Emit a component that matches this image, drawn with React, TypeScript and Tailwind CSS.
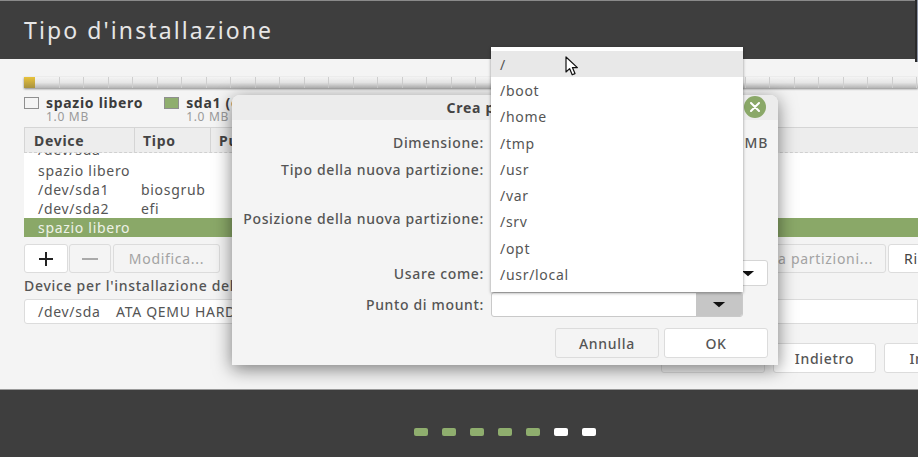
import React from 'react';

const MOUNT_POINTS = ['/', '/boot', '/home', '/tmp', '/usr', '/var', '/srv', '/opt', '/usr/local'];
const SEGMENTS = Array.from({ length: 37 }, (_, i) => i);
const STEPS = [true, true, true, true, true, false, false];

function Caret({ className = '' }: { className?: string }) {
  return (
    <svg viewBox="0 0 16 8" className={`w-[14px] h-[7px] ${className}`}>
      <path d="M1 1h14L8 7z" fill="#111" />
    </svg>
  );
}

function PartitionBar() {
  return (
    <div className="flex h-[11px] shadow-[0_1px_2px_rgba(0,0,0,0.45)] bg-gradient-to-b from-[#f4f4f4] via-[#e6e6e6] to-[#b5b5b5]">
      <div className="w-[11px] shrink-0 bg-gradient-to-b from-[#e8c23a] to-[#a8923f]" />
      {SEGMENTS.map(i => (
        <div key={i} className="w-[24.5px] shrink-0 border-r border-[#cfcfcf]" />
      ))}
    </div>
  );
}

function LegendItem({ name, swatch }: { name: string; swatch: string }) {
  return (
    <div className="flex gap-[7px]">
      <div className={`w-[15px] h-[12px] mt-[2px] border border-[#8f8f8f] ${swatch}`} />
      <div className="flex flex-col">
        <span className="text-[14px] leading-[16px] font-bold text-[#3c3c3c]">{name}</span>
        <span className="text-[12px] leading-[11px] text-[#9a9a9a]">1.0 MB</span>
      </div>
    </div>
  );
}

function ToolButton({ children, className = '' }: { children: React.ReactNode; className?: string }) {
  return (
    <div className={`h-[29px] flex items-center justify-center rounded-[3px] border border-[#dcdcdc] text-[14px] whitespace-nowrap ${className}`}>
      {children}
    </div>
  );
}

function InstallPage() {
  return (
    <main className="flex-1 bg-[#f4f4f4] pl-6 pt-[18px] overflow-hidden">
      <PartitionBar />
      <div className="flex gap-[21px] mt-[7px] h-[32px]">
        <LegendItem name="spazio libero" swatch="bg-[#f4f4f4]" />
        <LegendItem name="sda1 (efi)" swatch="bg-[#8fae6e]" />
      </div>

      <div className="border-t border-[#d5d5d5]">
        <div className="flex h-[25px] bg-[#ededed] border-b border-dashed border-[#d0d0d0] text-[14px] font-bold text-[#444]">
          <div className="w-[111px] pl-[9px] flex items-center border-l border-r border-[#d5d5d5]">Device</div>
          <div className="w-[76px] pl-[8px] flex items-center border-r border-[#d5d5d5]">Tipo</div>
          <div className="pl-[8px] flex items-center">Punto di mount</div>
        </div>
        <div className="h-[65px] bg-white flex flex-col justify-end overflow-hidden text-[14px] text-[#555]">
          {[
            ['/dev/sda', ''],
            ['spazio libero', ''],
            ['/dev/sda1', 'biosgrub'],
            ['/dev/sda2', 'efi'],
          ].map(([device, kind], i) => (
            <div key={device + kind} className={`flex h-[19px] shrink-0 items-center ${i === 0 ? 'mb-[2px]' : ''}`}>
              <span className="w-[103px] pl-[14px] box-content">{device}</span>
              <span>{kind}</span>
            </div>
          ))}
        </div>
        <div className="h-[19px] bg-[#8aa868] flex items-center pl-[14px] text-[14px] text-[#eef2e8]">spazio libero</div>
      </div>

      <div className="flex justify-between mt-[7px] mr-[-70px]">
        <div className="flex gap-[1px]">
          <ToolButton className="w-[44px] bg-white">
            <span className="relative block w-[14px] h-[14px]">
              <span className="absolute left-0 top-[6px] w-[14px] h-[2px] bg-[#222]" />
              <span className="absolute left-[6px] top-0 w-[2px] h-[14px] bg-[#222]" />
            </span>
          </ToolButton>
          <ToolButton className="w-[42px]">
            <span className="block w-[16px] h-[2px] bg-[#aaa]" />
          </ToolButton>
          <ToolButton className="w-[107px] ml-[1px] text-[#a3a3a3]">Modifica...</ToolButton>
        </div>
        <div className="flex gap-[2px]">
          <ToolButton className="w-[200px] pr-[12px] text-[#a3a3a3]">Nuova tabella partizioni...</ToolButton>
          <ToolButton className="w-[100px] justify-start pl-[15px] bg-white text-[#444]">Ripristina</ToolButton>
        </div>
      </div>

      <p className="mt-[3px] h-[20px] leading-[20px] text-[14px] font-medium text-[#555] whitespace-nowrap">
        Device per l'installazione del boot loader:
      </p>
      <div className="mt-[3px] h-[25px] bg-white border border-[#dcdcdc] rounded-l-[3px] flex items-center pl-[13px] text-[14px] text-[#555] whitespace-nowrap">
        <span className="w-[78px]">/dev/sda</span>
        <span>ATA QEMU HARDDISK (21.5 GB)</span>
      </div>

      <div className="flex justify-end gap-[8px] mt-[19px] mr-[-72px]">
        <ToolButton className="w-[104px] h-[30px]">Esci</ToolButton>
        <ToolButton className="w-[103px] h-[30px] bg-white text-[#555] font-medium">Indietro</ToolButton>
        <ToolButton className="w-[106px] h-[30px] bg-white text-[#555] font-medium">Installa</ToolButton>
      </div>
    </main>
  );
}

function FormRow({ label, className = '', children }: { label?: string; className?: string; children?: React.ReactNode }) {
  return (
    <div className={`flex items-center gap-[7px] ${className}`}>
      <span className="w-[252px] shrink-0 text-right text-[14px] font-medium tracking-[0.65px] text-[#555] whitespace-nowrap">{label}</span>
      <div className="flex-1 h-full">{children}</div>
    </div>
  );
}

function CreatePartitionDialog() {
  return (
    <div className="absolute left-[232px] top-[95px] w-[546px] h-[270px] bg-[#f4f4f4] rounded-t-[8px] shadow-[0_4px_18px_rgba(0,0,0,0.5)]">
      <div className="relative h-[25px] bg-[#ececec] rounded-t-[8px] flex items-center justify-center text-[14px] font-bold text-[#444]">
        Crea partizione
        <div className="absolute right-[12px] top-[1px] w-[22px] h-[22px] rounded-full bg-[#8aa868] flex items-center justify-center">
          <svg viewBox="0 0 10 10" className="w-[10px] h-[10px]">
            <path d="M1 1l8 8M9 1l-8 8" stroke="#fff" strokeWidth="2" strokeLinecap="round" />
          </svg>
        </div>
      </div>
      <div className="pt-[10px] pr-[10px]">
        <FormRow label="Dimensione:" className="h-[25px]">
          <div className="flex justify-end items-center h-full text-[14px] font-medium text-[#555]">MB</div>
        </FormRow>
        <FormRow label="Tipo della nuova partizione:" className="h-[25px] mt-[2px]" />
        <FormRow className="h-[24px]" />
        <FormRow label="Posizione della nuova partizione:" className="h-[25px]" />
        <FormRow className="h-[29px]" />
        <FormRow label="Usare come:" className="h-[26px]">
          <div className="h-full bg-white border border-[#d5d5d5] rounded-[3px] flex items-center justify-end pr-[12px]">
            <Caret />
          </div>
        </FormRow>
        <FormRow label="Punto di mount:" className="h-[25px] mt-[6px]">
          <div className="h-full mr-[25px] flex bg-white border border-[#c9c9c9] rounded-[3px] overflow-hidden">
            <div className="flex-1" />
            <div className="w-[46px] bg-[#c6c6c6] flex items-center justify-center">
              <Caret />
            </div>
          </div>
        </FormRow>
        <div className="flex justify-end gap-[5px] mt-[11px]">
          <ToolButton className="w-[104px] h-[30px] text-[#555] font-medium">Annulla</ToolButton>
          <ToolButton className="w-[104px] h-[30px] bg-white text-[#555] font-medium">OK</ToolButton>
        </div>
      </div>
    </div>
  );
}

function MountPointMenu() {
  return (
    <ul className="absolute left-[491px] top-[47px] w-[252px] h-[245px] pt-[4px] bg-white shadow-[0_1px_3px_rgba(0,0,0,0.4)] text-[14px] text-[#555]">
      {MOUNT_POINTS.map((point, i) => (
        <li key={point} className={`h-[26.3px] flex items-center pl-[9px] ${i === 0 ? 'bg-[#e8e8e8]' : ''}`}>
          {point}
        </li>
      ))}
    </ul>
  );
}

function MouseCursor() {
  return (
    <svg viewBox="0 0 14 21" className="absolute left-[565px] top-[56px] w-[14px] h-[21px]">
      <path d="M1 1v15l3.6-3.4 2.6 6.2 2.8-1.2-2.6-6h5z" fill="#fff" stroke="#111" strokeWidth="1.2" strokeLinejoin="round" />
    </svg>
  );
}

export default function App() {
  return (
    <div className="relative w-[918px] h-[457px] flex flex-col overflow-hidden tracking-[0.7px] font-['Noto_Sans',sans-serif]">
      <header className="h-[59px] shrink-0 bg-[#3e3e3e] border-t border-[#8a8a8a] flex items-center pl-6">
        <h1 className="text-[23px] tracking-[2.1px] text-[#e6e6e6]">Tipo d'installazione</h1>
      </header>
      <InstallPage />
      <footer className="h-[68px] shrink-0 bg-[#3e3e3e] border-t border-[#9a9a9a] flex justify-center items-center gap-[14px] pl-[91px] pt-[16px]">
        {STEPS.map((done, i) => (
          <span key={i} className={`w-[14px] h-[8px] rounded-[2px] ${done ? 'bg-[#8fae6e]' : 'bg-white'}`} />
        ))}
      </footer>
      {/* sliver of the neighbouring window along the right edge */}
      <div className="absolute left-[915px] top-0 w-[3px] h-[62px] border-l-2 border-[#2a2a2a] bg-[#8b93a5]" />
      <CreatePartitionDialog />
      <MountPointMenu />
      <MouseCursor />
    </div>
  );
}
